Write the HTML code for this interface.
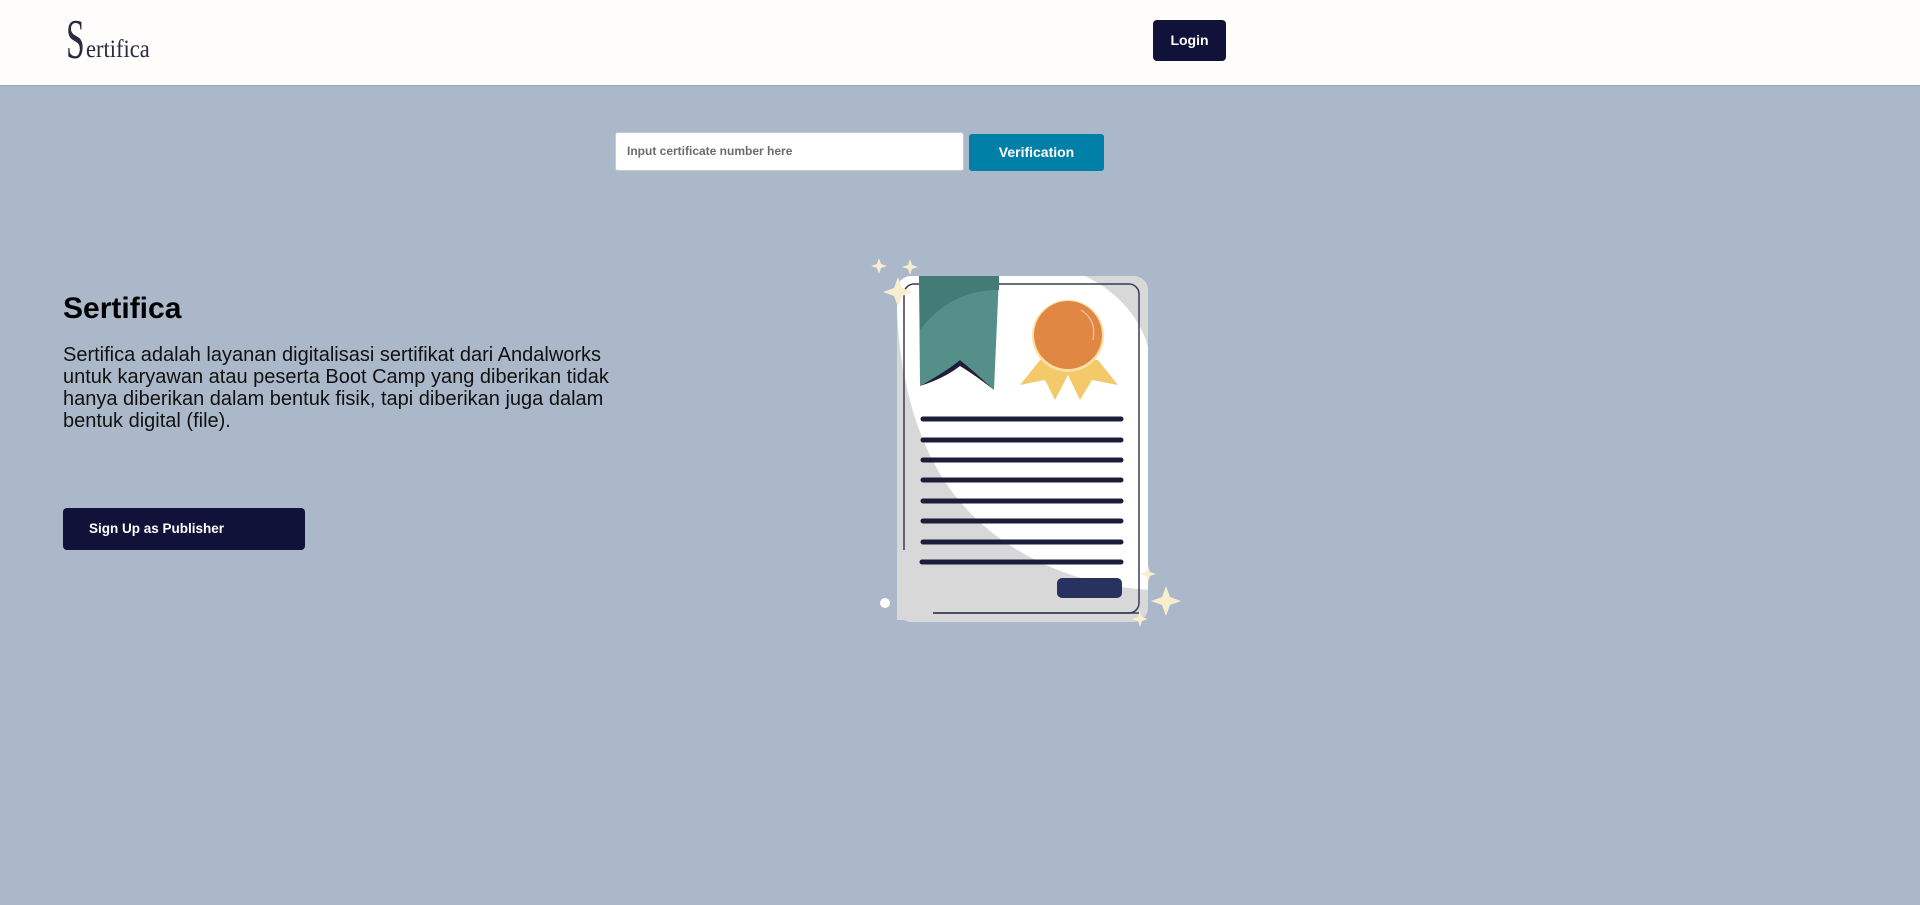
<!DOCTYPE html>
<html><head><meta charset="utf-8"><style>
*{margin:0;padding:0;box-sizing:border-box}
body{width:1920px;height:905px;background:#abb8c9;font-family:"Liberation Sans",Arial,sans-serif;position:relative;overflow:hidden}
.hdr{position:absolute;left:0;top:0;width:1920px;height:86px;background:#fefdfb;border-bottom:1px solid #9aa6b6}
.logo{position:absolute;left:66px;top:12px;font-family:"Liberation Serif",serif;color:#2a2a40}
.logo .s{font-size:56px;font-weight:normal;position:absolute;left:0;top:0;line-height:56px;transform:scaleX(0.6);transform-origin:left;display:inline-block}
.logo .r{font-size:25px;position:absolute;left:20px;top:24px;transform:scaleX(0.9);transform-origin:left;white-space:nowrap}
.login{position:absolute;left:1153px;top:20px;width:73px;height:41px;background:#10123a;border-radius:4px;color:#fff;font-weight:bold;font-size:14px;line-height:41px;text-align:center}
.inp{position:absolute;left:615px;top:132px;width:349px;height:39px;background:#fff;border:1px solid #c9c9c9;border-radius:3px;font-size:12px;font-weight:bold;color:#6b6b6b;padding-left:11px;line-height:37px}
.ver{position:absolute;left:969px;top:134px;width:135px;height:37px;background:#0080a7;border-radius:3px;color:#fff;font-weight:bold;font-size:14px;line-height:37px;text-align:center}
h1{position:absolute;left:63px;top:292px;font-size:30px;font-weight:bold;color:#000}
p{position:absolute;left:63px;top:344px;width:565px;font-size:20px;line-height:22px;color:#111}
.su{position:absolute;left:63px;top:508px;width:242px;height:42px;background:#10123a;border-radius:4px;color:#fff;font-weight:bold;font-size:13.5px;line-height:42px;padding-left:26px}
svg{position:absolute;left:0;top:0}
</style></head><body>
<div class="hdr">
<div class="logo"><span class="s">S</span><span class="r">ertifica</span></div>
<div class="login">Login</div>
</div>
<div class="inp">Input certificate number here</div>
<div class="ver">Verification</div>
<h1>Sertifica</h1>
<p>Sertifica adalah layanan digitalisasi sertifikat dari Andalworks untuk karyawan atau peserta Boot Camp yang diberikan tidak hanya diberikan dalam bentuk fisik, tapi diberikan juga dalam bentuk digital (file).</p>
<div class="su">Sign Up as Publisher</div>
<svg width="1920" height="905" viewBox="0 0 1920 905">
<defs><clipPath id="c"><rect x="897" y="276" width="251" height="346" rx="14"/></clipPath></defs>
<rect x="897" y="276" width="251" height="346" rx="14" fill="#d8d8d8"/>
<path clip-path="url(#c)" d="M897 276 H1085 C1125 295 1148 330 1150 360 V590 C1060 585 975 540 935 465 C905 410 895 340 897 276Z" fill="#fff"/>
<rect x="904" y="284" width="235" height="329" rx="10" fill="none" stroke="#3b3b55" stroke-width="1.5"/>
<rect x="897" y="550" width="36" height="70" fill="#d8d8d8"/>
<path d="M919 276 H999 L994 390 Q975 372 960 360 Q945 372 920 386Z" fill="#548f8a"/>
<path d="M919 276 H999 V290 Q950 290 920 330Z" fill="#437c77"/>
<path d="M920 386 Q945 372 960 360 Q975 372 994 390 Q975 375 960 366 Q945 378 920 386Z" fill="#1e1e3a"/>
<path d="M1040 360 L1020 385 L1045 380 L1055 400 L1068 375 L1080 400 L1092 380 L1118 385 L1098 360Z" fill="#f3c96a"/>
<circle cx="1068" cy="336" r="36" fill="#fbe1a6"/>
<circle cx="1068" cy="335" r="34" fill="#e08843"/>
<path d="M1081 310 Q1097 320 1093 340" stroke="#f3c4a4" stroke-width="1.2" fill="none"/>
<g stroke="#1c1d3a" stroke-width="5" stroke-linecap="round">
<line x1="923" y1="419" x2="1121" y2="419"/><line x1="923" y1="440" x2="1121" y2="440"/>
<line x1="923" y1="460" x2="1121" y2="460"/><line x1="923" y1="480" x2="1121" y2="480"/>
<line x1="923" y1="501" x2="1121" y2="501"/><line x1="923" y1="521" x2="1121" y2="521"/>
<line x1="923" y1="542" x2="1121" y2="542"/><line x1="922" y1="562" x2="1121" y2="562"/>
</g>
<rect x="1057" y="578" width="65" height="20" rx="5" fill="#283260"/>
<line x1="933" y1="613" x2="1139" y2="613" stroke="#3b3b55" stroke-width="1.5"/>
<circle cx="885" cy="603" r="5" fill="#fff"/>
<g fill="#f8eecf">
<path d="M879 258 l2 6 6 2 -6 2 -2 6 -2 -6 -6 -2 6 -2z"/>
<path d="M910 259 l2 6 6 2 -6 2 -2 6 -2 -6 -6 -2 6 -2z"/>
<path d="M898 277 l4 11 11 4 -11 4 -4 11 -4 -11 -11 -4 11 -4z"/>
<path d="M1148 566 l2 6 6 2 -6 2 -2 6 -2 -6 -6 -2 6 -2z"/>
<path d="M1166 586 l4 11 11 4 -11 4 -4 11 -4 -11 -11 -4 11 -4z"/>
<path d="M1140 611 l2 6 6 2 -6 2 -2 6 -2 -6 -6 -2 6 -2z"/>
</g>
</svg>
</body></html>
